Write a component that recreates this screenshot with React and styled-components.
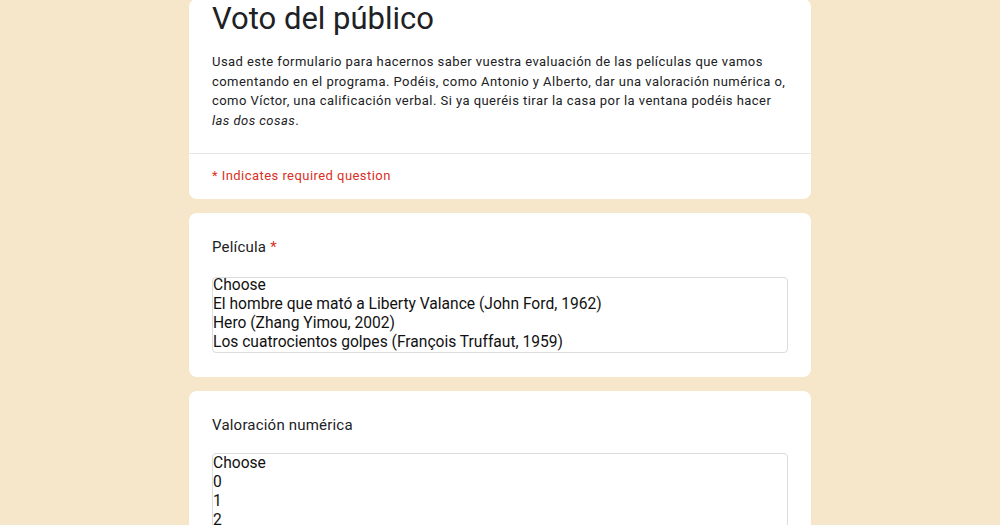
import React from 'react';
import styled, { createGlobalStyle } from 'styled-components';

const GlobalStyle = createGlobalStyle`
  html, body {
    margin: 0;
    padding: 0;
    background: #f6e7cb;
    font-family: Roboto, "Noto Sans", Arial, sans-serif;
    color: #202124;
  }
`;

const Page = styled.div`
  width: 622px;
  margin: 0 auto;
  display: flex;
  flex-direction: column;
  gap: 14px;
  padding-bottom: 40px;
`;

const Card = styled.section`
  background: #fff;
  border-radius: 8px;
  display: flex;
  flex-direction: column;
  margin-top: ${props => props.offset || 0}px;
`;

const Header = styled.div`
  padding: 0 23px 23px;
  border-bottom: 1px solid #e6e6e6;
`;

const Title = styled.h1`
  margin: 0;
  font-size: 31px;
  line-height: 40px;
  font-weight: 400;
  color: #202124;
`;

const Description = styled.p`
  margin: 13px 0 0;
  font-size: 13px;
  line-height: 19.5px;
  letter-spacing: 0.45px;
  color: #202124;
`;

const Required = styled.div`
  padding: 12px 23px 13px;
  font-size: 13px;
  line-height: 20px;
  letter-spacing: 0.45px;
  color: #d93025;
`;

const Question = styled.div`
  padding: 23px 23px 24px;
  display: flex;
  flex-direction: column;
  gap: ${props => props.gap}px;
`;

const Label = styled.div`
  font-size: 15px;
  line-height: 22px;
  color: #202124;
  letter-spacing: 0.2px;

  span {
    color: #d93025;
  }
`;

const ListBox = styled.div`
  border: 1px solid #dcdcdc;
  border-radius: 4px;
  height: ${props => props.height}px;
  overflow: hidden;
  box-sizing: border-box;
`;

const Options = styled.div`
  margin-top: ${props => props.shift}px;
`;

const Option = styled.div`
  font-size: 15.6px;
  line-height: 19px;
  color: #111;
  white-space: nowrap;
`;

const films = [
  'Choose',
  'El hombre que mató a Liberty Valance (John Ford, 1962)',
  'Hero (Zhang Yimou, 2002)',
  'Los cuatrocientos golpes (François Truffaut, 1959)',
];

const scores = ['Choose', '0', '1', '2', '3', '4', '5'];

export default function App() {
  return (
    <>
      <GlobalStyle />
      <Page>
        <Card offset={-1}>
          <Header>
            <Title>Voto del público</Title>
            <Description>
              Usad este formulario para hacernos saber vuestra evaluación de las películas que vamos<br />
              comentando en el programa. Podéis, como Antonio y Alberto, dar una valoración numérica o,<br />
              como Víctor, una calificación verbal. Si ya queréis tirar la casa por la ventana podéis hacer<br />
              <i>las dos cosas</i>.
            </Description>
          </Header>
          <Required>* Indicates required question</Required>
        </Card>

        <Card>
          <Question gap={19}>
            <Label>Película <span>*</span></Label>
            <ListBox height={76}>
              <Options shift={-2}>
                {films.map(f => <Option key={f}>{f}</Option>)}
              </Options>
            </ListBox>
          </Question>
        </Card>

        <Card>
          <Question gap={17}>
            <Label>Valoración numérica</Label>
            <ListBox height={160}>
              <Options shift={0}>
                {scores.map(s => <Option key={s}>{s}</Option>)}
              </Options>
            </ListBox>
          </Question>
        </Card>
      </Page>
    </>
  );
}
